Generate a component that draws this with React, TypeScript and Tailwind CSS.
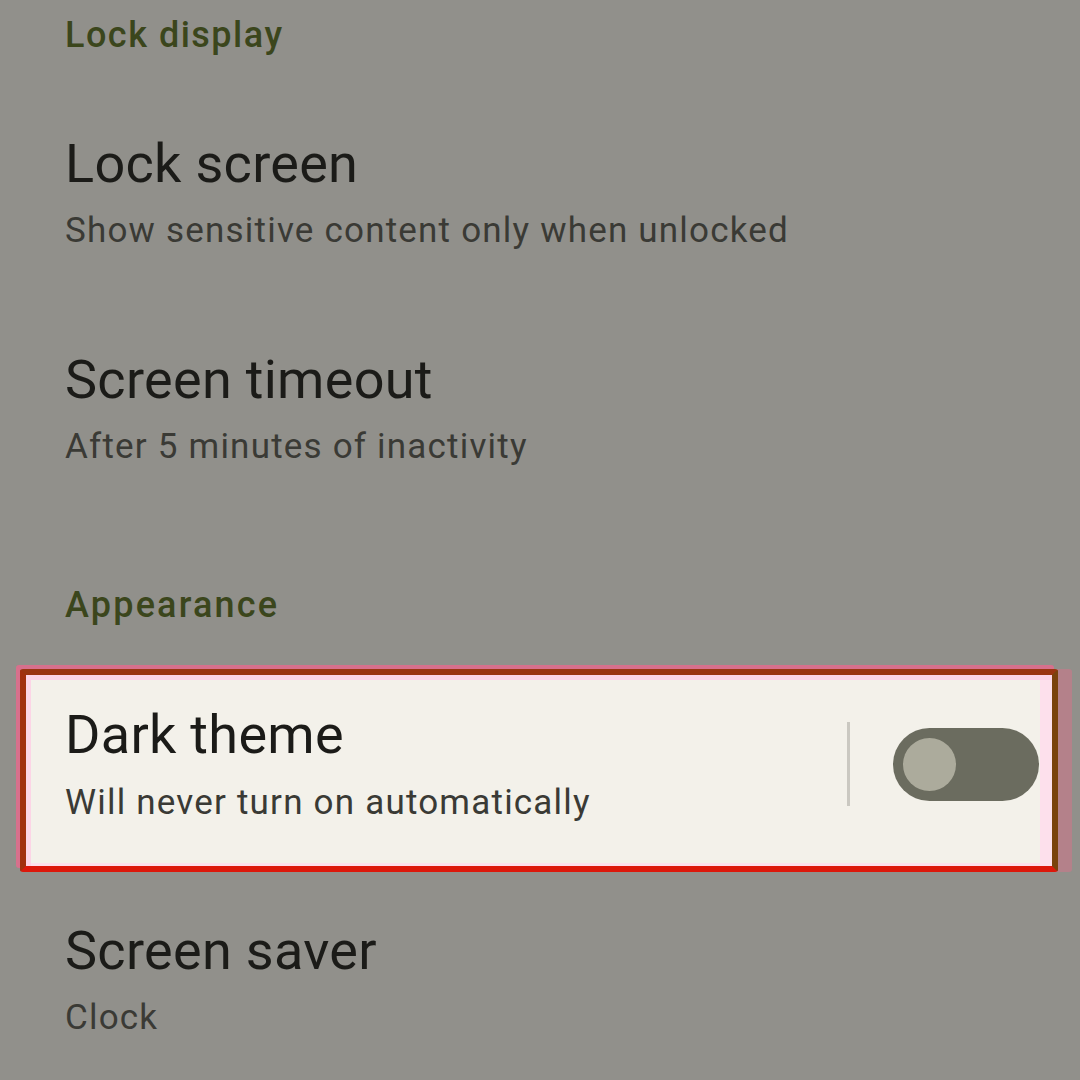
import React from "react";

type Row = { title: string; summary: string; mt: string };

function SettingRow({ title, summary, mt }: Row) {
  return (
    <div className={`${mt} pl-[65px]`}>
      <div className="text-[54px] leading-none tracking-[0.3px] text-[#1b1b18]">{title}</div>
      <div className="mt-[22px] text-[35px] leading-none tracking-[1.2px] text-[#3a3a35]">{summary}</div>
    </div>
  );
}

function Toggle() {
  return (
    <div className="flex h-[73px] w-[146px] shrink-0 items-center rounded-full bg-[#6b6c5f] pl-[10px]">
      <div className="h-[53px] w-[53px] rounded-full bg-[#acab9c]" />
    </div>
  );
}

export default function App() {
  return (
    <div className="h-[1080px] w-[1080px] overflow-hidden bg-[#91908b] font-['Roboto',sans-serif]">
      <div className="pl-[65px] pt-[17px] text-[36px] font-medium leading-none tracking-[1.5px] text-[#3b461c]">Lock display</div>

      <SettingRow mt="mt-[84px]" title="Lock screen" summary="Show sensitive content only when unlocked" />
      <SettingRow mt="mt-[105px]" title="Screen timeout" summary="After 5 minutes of inactivity" />

      <div className="mt-[123px] pl-[65px] text-[36px] font-medium leading-none tracking-[2.2px] text-[#3b461c]">Appearance</div>

      {/* highlighted row */}
      <div className="ml-[20px] mt-[46px] w-[1038px] rounded-[3px] border-[6px] border-t-[#9a3510] border-l-[#a2300e] border-b-[#dc180b] border-r-[#7a420c] bg-[#f3f1ea] shadow-[inset_5px_5px_0_#fcd5e6,inset_-12px_-3px_0_#fde0ec,-4px_-4px_0_#d7708c,14px_0_0_#b4818a]">
        <div className="flex items-center pb-[46px] pl-[39px] pr-[13px] pt-[33px]">
          <div className="flex-1">
            <div className="text-[54px] leading-none tracking-[0.3px] text-[#1b1b18]">Dark theme</div>
            <div className="mt-[23px] text-[35px] leading-none tracking-[1.2px] text-[#3a3a35]">Will never turn on automatically</div>
          </div>
          <div className="mr-[43px] h-[84px] w-[3px] bg-[#cac8c1]" />
          <Toggle />
        </div>
      </div>

      <SettingRow mt="mt-[52px]" title="Screen saver" summary="Clock" />
    </div>
  );
}
